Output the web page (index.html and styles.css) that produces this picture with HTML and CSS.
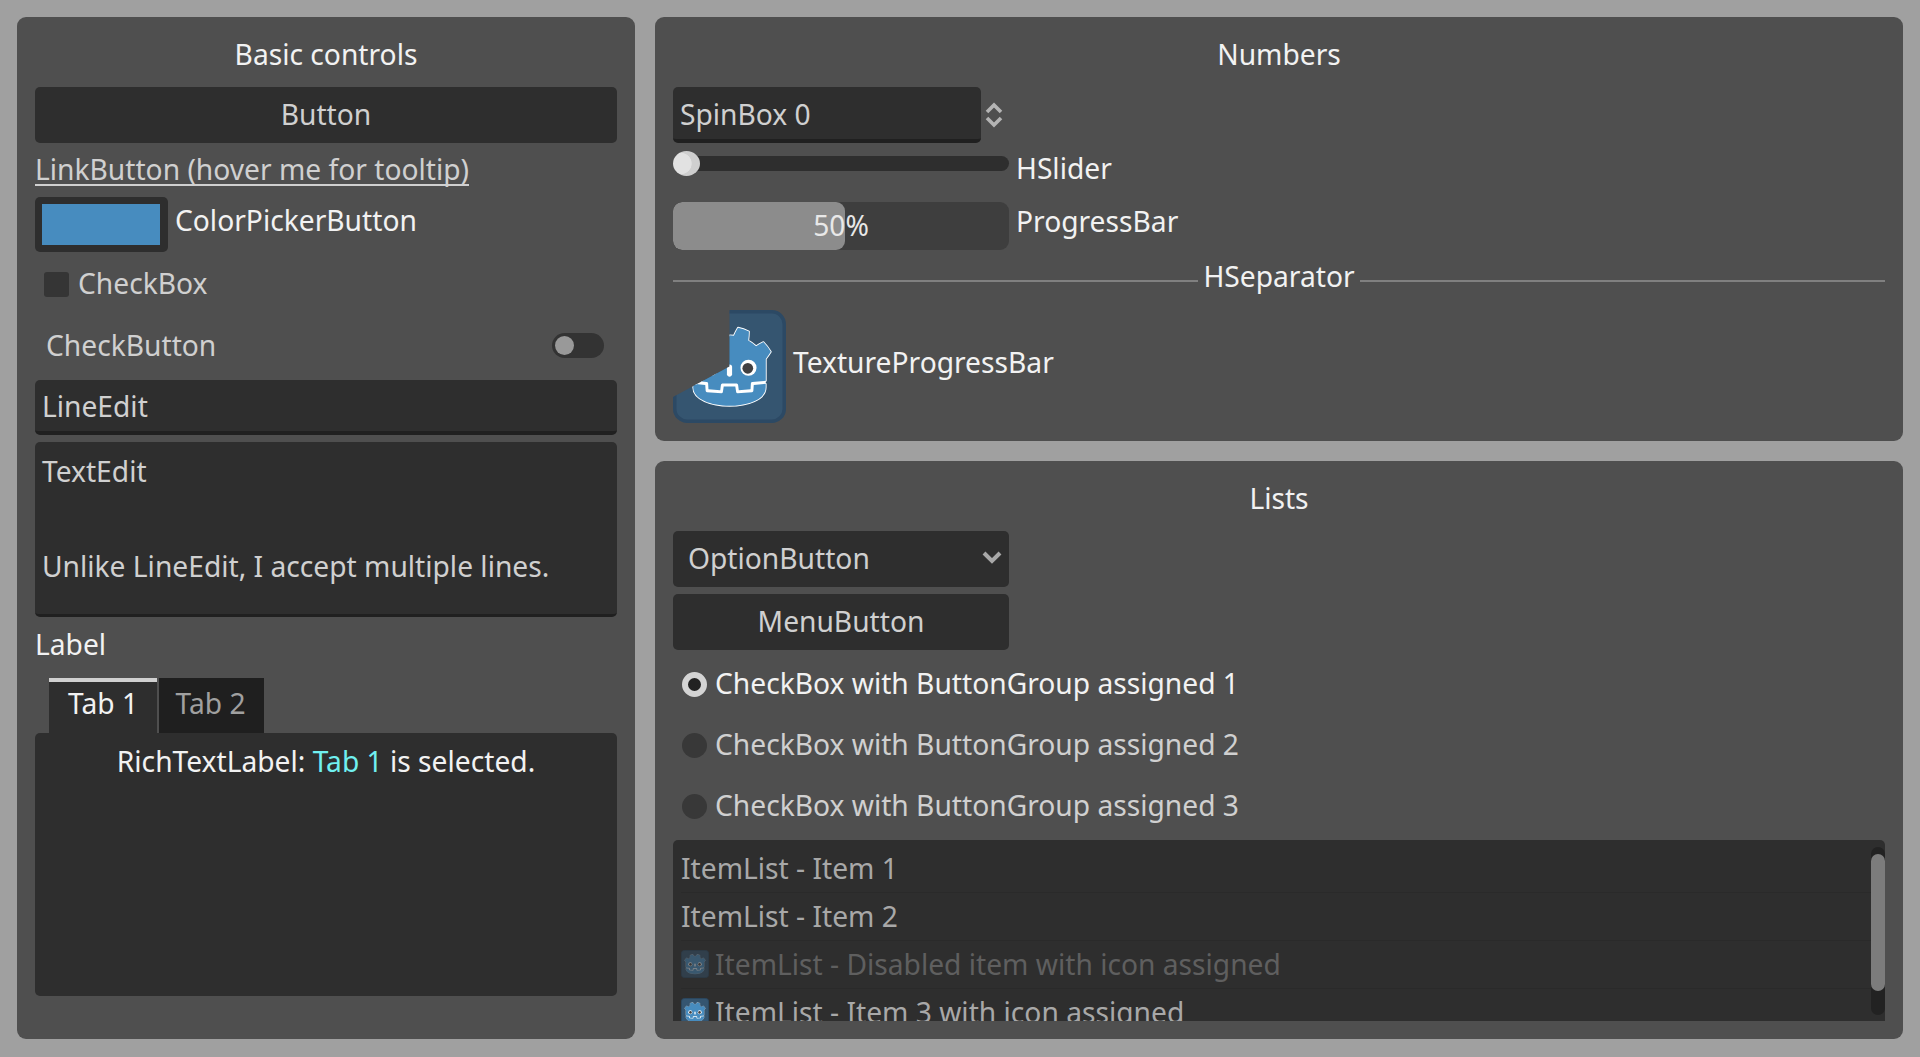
FILE: index.html
```html
<!DOCTYPE html>
<html lang="en">
<head>
    <meta charset="UTF-8">
    <title>Control Gallery</title>
    <link rel="stylesheet" href="styles.css">
</head>
<body>
    <!-- Godot icon, reused by the texture bar and the item list -->
    <svg class="defs" width="0" height="0">
        <symbol id="godotIcon" viewBox="0 0 128 128">
            <rect x="2" y="2" width="124" height="124" rx="14" fill="#355570" stroke="#2c4964" stroke-width="4"/>
            <g transform="translate(12.3 12.3) scale(.101)">
                <path fill="#fff" d="M105 673v33q407 354 814 0v-33z"/>
                <path fill="#478cbf" stroke="#fff" stroke-width="20" stroke-linejoin="round" paint-order="stroke" d="m105 673 152 14q12 1 15 14l4 67 132 10 8-61q2-11 15-15h162q13 4 15 15l8 61 132-10 4-67q3-13 15-14l152-14V427q30-39 56-81-35-59-83-108-43 20-82 47-40-37-88-64 7-51 8-102-59-28-123-42-26 43-46 89-49-7-98 0-20-46-46-89-64 14-123 42 1 51 8 102-48 27-88 64-39-27-82-47-48 49-83 108 26 42 56 81zm0 33v39c0 276 813 276 813 0v-39l-134 12-5 69q-2 10-14 13l-162 11q-12 0-16-11l-10-65H447l-10 65q-4 11-16 11l-162-11q-12-3-14-13l-5-69z"/>
                <path fill="#fff" d="M483 600c3 34 55 34 58 0v-86c-3-34-55-34-58 0z"/>
                <circle fill="#fff" cx="725" cy="526" r="90"/>
                <circle fill="#fff" cx="299" cy="526" r="90"/>
                <circle fill="#414042" cx="717" cy="532" r="60"/>
                <circle fill="#414042" cx="307" cy="532" r="60"/>
            </g>
        </symbol>
    </svg>

    <section class="panel basic">
        <div class="title">Basic controls</div>
        <div class="btn">Button</div>
        <div class="link-row"><span class="link">LinkButton (hover me for tooltip)</span></div>
        <div class="color-row">
            <div class="color-btn"><div class="swatch"></div></div>
            <span class="label">ColorPickerButton</span>
        </div>
        <div class="check-row">
            <span class="check-box"></span>
            <span class="check-text">CheckBox</span>
        </div>
        <div class="toggle-row">
            <span>CheckButton</span>
            <span class="toggle"><span class="knob"></span></span>
        </div>
        <div class="line-edit">LineEdit</div>
        <div class="text-edit">
            <div>TextEdit</div>
            <div>&nbsp;</div>
            <div>Unlike LineEdit, I accept multiple lines.</div>
        </div>
        <div class="label plain-label">Label</div>
        <div class="tabs">
            <div class="tab tab-on">Tab 1</div>
            <div class="tab tab-off">Tab 2</div>
        </div>
        <div class="tab-panel">RichTextLabel: <span class="accent">Tab 1</span> is selected.</div>
    </section>

    <div class="right-col">
        <section class="panel numbers">
            <div class="title">Numbers</div>
            <div class="spin-row">
                <div class="line-edit spin-box">SpinBox 0</div>
                <svg class="spin-arrows" width="18" height="26" viewBox="0 0 18 26">
                    <path d="M2 10l7-7 7 7M2 16l7 7 7-7" fill="none" stroke="#b4b4b4" stroke-width="3.6"/>
                </svg>
            </div>
            <div class="slider-row">
                <div class="slider"><span class="grabber"></span></div>
                <span class="label">HSlider</span>
            </div>
            <div class="progress-row">
                <div class="progress">
                    <div class="progress-fill"></div>
                    <span class="progress-text">50%</span>
                </div>
                <span class="label">ProgressBar</span>
            </div>
            <div class="sep-row">
                <span class="sep-line"></span>
                <span class="label sep-label">HSeparator</span>
                <span class="sep-line"></span>
            </div>
            <div class="texture-row">
                <svg class="texture-bar" width="113" height="113"><use href="#godotIcon"/></svg>
                <span class="label">TextureProgressBar</span>
            </div>
        </section>

        <section class="panel lists">
            <div class="title">Lists</div>
            <div class="btn option-btn">
                <span>OptionButton</span>
                <svg width="20" height="14" viewBox="0 0 20 14">
                    <path d="M2 2l8 8 8-8" fill="none" stroke="#a8a8a8" stroke-width="4"/>
                </svg>
            </div>
            <div class="btn menu-btn">MenuButton</div>
            <div class="radio-row radio-on"><span class="radio"></span><span class="radio-text">CheckBox with ButtonGroup assigned 1</span></div>
            <div class="radio-row"><span class="radio"></span><span class="radio-text">CheckBox with ButtonGroup assigned 2</span></div>
            <div class="radio-row"><span class="radio"></span><span class="radio-text">CheckBox with ButtonGroup assigned 3</span></div>
            <div class="item-list">
                <div class="item">ItemList - Item 1</div>
                <div class="item">ItemList - Item 2</div>
                <div class="item item-disabled">
                    <svg class="item-icon" width="28" height="28"><use href="#godotIcon"/></svg>
                    <span>ItemList - Disabled item with icon assigned</span>
                </div>
                <div class="item">
                    <svg class="item-icon" width="28" height="28"><use href="#godotIcon"/></svg>
                    <span>ItemList - Item 3 with icon assigned</span>
                </div>
                <div class="scrollbar"><div class="scroll-grab"></div></div>
            </div>
        </section>
    </div>
</body>
</html>
```

FILE: styles.css
```css
body {
    margin: 0;
    height: 1057px;
    box-sizing: border-box;
    padding: 17px 17px 18px;
    display: flex;
    gap: 20px;
    overflow: hidden;
    background-color: #a0a0a0;
    color: #d0d0d0;
    font-family: "Noto Sans", sans-serif;
    font-size: 28.2px;
    line-height: 38px;
}
.defs {
    position: absolute;
}

.panel {
    background-color: #4f4f4f;
    border-radius: 9px;
    padding: 14px 18px 18px;
    display: flex;
    flex-direction: column;
    gap: 7px;
    box-sizing: border-box;
}
.basic {
    width: 618px;
    flex: none;
}
.right-col {
    flex: 1;
    display: flex;
    flex-direction: column;
    gap: 20px;
}
.lists {
    flex: 1;
}
.title {
    height: 49px;
    box-sizing: border-box;
    padding-bottom: 3px;
    display: flex;
    align-items: center;
    justify-content: center;
    color: #f2f2f2;
}
.label {
    color: #f2f2f2;
}

.btn {
    height: 56px;
    flex: none;
    box-sizing: border-box;
    padding-bottom: 2px;
    display: flex;
    align-items: center;
    justify-content: center;
    background-color: #2e2e2e;
    border-radius: 5px;
}

/* Basic controls */
.link-row {
    height: 40px;
}
.link {
    display: inline-block;
    height: 34px;
    line-height: 38px;
    border-bottom: 2px solid #d0d0d0;
}
.color-row {
    height: 55px;
    display: flex;
    align-items: center;
    gap: 7px;
}
.color-row .label {
    margin-top: -10px;
}
.color-btn {
    width: 133px;
    height: 55px;
    box-sizing: border-box;
    padding: 7px;
    background-color: #2e2e2e;
    border-radius: 5px;
}
.swatch {
    height: 41px;
    width: 118px;
    background-color: #478cbf;
}
.check-row {
    height: 50px;
    display: flex;
    align-items: center;
    gap: 9px;
    padding-left: 9px;
}
.check-text {
    margin-top: -2px;
}
.check-box {
    width: 25px;
    height: 25px;
    background-color: #353535;
    border-radius: 3px;
}
.toggle-row {
    height: 57px;
    display: flex;
    align-items: center;
    justify-content: space-between;
    padding: 0 13px 0 11px;
}
.toggle {
    width: 52px;
    height: 25px;
    margin-top: 2px;
    box-sizing: border-box;
    padding: 3px;
    background-color: #333;
    border-radius: 13px;
}
.knob {
    display: block;
    width: 19px;
    height: 19px;
    background-color: #999;
    border-radius: 50%;
}
.line-edit {
    height: 55px;
    flex: none;
    box-sizing: border-box;
    padding: 0 7px;
    display: flex;
    align-items: center;
    background-color: #2e2e2e;
    border-bottom: 4px solid #202020;
    border-radius: 5px;
}
.text-edit {
    height: 175px;
    box-sizing: border-box;
    padding: 6px 7px;
    background-color: #2e2e2e;
    border-bottom: 3px solid #202020;
    border-radius: 5px;
    line-height: 47.5px;
}
.plain-label {
    height: 40px;
    display: flex;
    align-items: center;
}
.tabs {
    display: flex;
    gap: 2px;
    padding-left: 14px;
    height: 55px;
    margin-top: 7px;
    margin-bottom: -7px;
}
.tab {
    display: flex;
    align-items: center;
    justify-content: center;
    box-sizing: border-box;
}
.tab-on {
    width: 108px;
    padding-bottom: 9px;
    background-color: #2e2e2e;
    border-top: 4px solid #d0d0d0;
    color: #f2f2f2;
}
.tab-off {
    width: 105px;
    padding: 0 2px 5px 0;
    background-color: #1f1f1f;
    color: #a0a0a0;
}
.tab-panel {
    height: 263px;
    box-sizing: border-box;
    padding-top: 9px;
    text-align: center;
    background-color: #2e2e2e;
    border-radius: 5px;
    color: #f2f2f2;
}
.accent {
    color: #70f0f0;
}

/* Numbers */
.spin-row {
    height: 56px;
    display: flex;
    align-items: center;
    gap: 4px;
}
.spin-box {
    width: 308px;
    height: 56px;
    padding-top: 2px;
}
.slider-row {
    height: 45px;
    display: flex;
    gap: 7px;
}
.slider {
    position: relative;
    width: 336px;
    height: 15px;
    margin-top: 6px;
    background-color: #2e2e2e;
    border-radius: 8px;
}
.grabber {
    position: absolute;
    left: 0;
    top: -5px;
    width: 27px;
    height: 25px;
    border-radius: 50%;
    background: radial-gradient(circle at 30% 50%, #e2e2e2 45%, #cfcfcf 48%);
}
.slider-row .label {
    line-height: 37px;
}
.progress-row {
    height: 48px;
    display: flex;
    gap: 7px;
}
.progress {
    position: relative;
    width: 336px;
    height: 48px;
    background-color: #3e3e3e;
    border-radius: 9px;
    overflow: hidden;
    text-align: center;
    line-height: 46px;
}
.progress-fill {
    position: absolute;
    left: 0;
    top: 0;
    bottom: 0;
    width: 172px;
    background-color: #8c8c8c;
    border-radius: 9px;
}
.progress-text {
    position: relative;
    color: #e8e8e8;
}
.progress-row .label {
    line-height: 38px;
}
.sep-row {
    height: 46px;
    padding-top: 1px;
    box-sizing: border-box;
    display: flex;
    align-items: center;
    gap: 5px;
}
.sep-line {
    flex: 1;
    height: 2px;
    background-color: #808080;
}
.sep-label {
    margin-top: -10px;
}
.texture-row {
    height: 113px;
    display: flex;
    align-items: center;
    gap: 7px;
}
.texture-row .label {
    margin-top: -9px;
}
.texture-bar {
    clip-path: polygon(50% 0, 100% 0, 100% 100%, 0 100%, 0 77%, 50% 50%);
}

/* Lists */
.option-btn, .menu-btn {
    width: 336px;
}
.option-btn {
    justify-content: space-between;
    padding: 0 7px 2px 15px;
}
.radio-row {
    height: 54px;
    flex: none;
    display: flex;
    align-items: center;
    gap: 8px;
    padding-left: 9px;
}
.radio {
    width: 25px;
    height: 25px;
    box-sizing: border-box;
    border-radius: 50%;
    background-color: #383838;
}
.radio-text {
    margin-top: -3px;
}
.radio-on {
    color: #f2f2f2;
}
.radio-on .radio {
    background-color: #222;
    border: 6px solid #d4d4d4;
}
.item-list {
    position: relative;
    height: 181px;
    box-sizing: border-box;
    padding: 5px 14px 0 8px;
    background-color: #2e2e2e;
    border-radius: 5px 5px 0 0;
    overflow: hidden;
    color: #a8a8a8;
}
.item {
    height: 48px;
    box-sizing: border-box;
    padding-bottom: 2px;
    flex: none;
    display: flex;
    align-items: center;
    gap: 6px;
    border-bottom: 1px solid #2a2a2a;
    white-space: nowrap;
}
.item-disabled {
    color: #5f5f5f;
}
.item-disabled .item-icon {
    opacity: 0.45;
}
.scrollbar {
    position: absolute;
    right: 0;
    top: 7px;
    width: 14px;
    height: 168px;
    box-sizing: border-box;
    padding-top: 7px;
    background-color: #222;
    border-radius: 7px;
}
.scroll-grab {
    height: 137px;
    background-color: #7c7c7c;
    border-radius: 7px;
}
```
